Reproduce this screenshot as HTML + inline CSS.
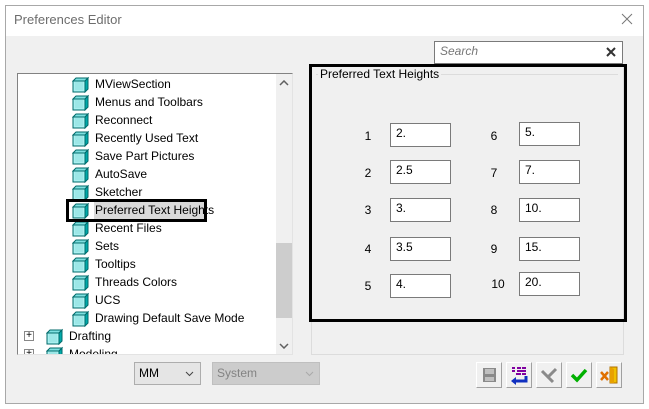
<!DOCTYPE html>
<html><head><meta charset="utf-8"><style>
*{margin:0;padding:0;box-sizing:border-box}
body{width:649px;height:409px;background:#fff;position:relative;overflow:hidden;font-family:"Liberation Sans",Arial,sans-serif;font-size:12px;color:#000}
.a{position:absolute}
.win{left:5px;top:5px;width:639px;height:399px;border:1px solid #a8a8a8;background:#f0f0f0}
.title{left:6px;top:6px;width:637px;height:30px;background:#fff}
.tree{left:17px;top:73px;width:276px;height:282px;border:1px solid #828282;border-right-color:#e3e3e3;border-bottom-color:#e3e3e3;background:#fff;overflow:hidden}
.row{position:absolute;height:18px;line-height:18px;white-space:nowrap;z-index:2}
.inp{position:absolute;width:61px;height:24px;border:1px solid #7a7a7a;background:#fff;padding-left:5px;line-height:18px}
.lbl{position:absolute;width:20px;text-align:center}
.btn{position:absolute;top:362px;width:26px;height:26px;background:#f0f0f0;border:1px solid #fff;border-right-color:#a0a0a0;border-bottom-color:#a0a0a0}
</style></head><body>
<div class="a win"></div>
<div class="a title"></div>
<div class="a" style="left:14px;top:12px;font-size:13px;color:#6d6d6d">Preferences Editor</div>
<svg class="a" style="left:621px;top:13px" width="12" height="12"><path d="M1 1L11 11M11 1L1 11" stroke="#777" stroke-width="1"/></svg>

<div class="a" style="left:434px;top:41px;width:189px;height:23px;border:1px solid #7a7a7a;background:#fff"></div>
<div class="a" style="left:440px;top:44px;font-style:italic;color:#777">Search</div>
<svg class="a" style="left:606px;top:47px" width="10" height="10"><path d="M1 1L9 9M9 1L1 9" stroke="#333" stroke-width="2"/></svg>

<div class="a tree">
<svg width="0" height="0" style="position:absolute"><defs><g id="cube"><path d="M1 5L4 2H16L13 5Z" fill="#7ee0e0" stroke="#006a6a"/><path d="M13 5L16 2V13L13 16Z" fill="#0aa" stroke="#006a6a"/><rect x="1" y="5" width="12" height="11" fill="#a9f0f0" stroke="#006a6a"/><path d="M3 7h8M3 9h8M3 11h8M3 13h8" stroke="#7cc" stroke-width=".6"/></g></defs></svg>
</div>
<div class="a" style="left:18px;top:74px;width:258px;height:280px;overflow:hidden" id="rows">
</div>
<div class="a" style="left:276px;top:74px;width:16px;height:280px;background:#f0f0f0"></div>
<div class="a" style="left:276px;top:243px;width:16px;height:75px;background:#cdcdcd"></div>
<svg class="a" style="left:279px;top:80px" width="10" height="6"><path d="M1 5L5 1L9 5" stroke="#606060" fill="none" stroke-width="1.5"/></svg>
<svg class="a" style="left:279px;top:343px" width="10" height="6"><path d="M1 1L5 5L9 1" stroke="#606060" fill="none" stroke-width="1.5"/></svg>

<div class="a" style="left:311px;top:65px;width:313px;height:290px;border:1px solid #dcdcdc"></div>
<div class="a" style="left:309px;top:64px;width:318px;height:258px;border:3px solid #000"></div>
<div class="a" style="left:316px;top:74px;width:302px;border-top:1px solid #dcdcdc"></div>
<div class="a" style="left:318px;top:67px;background:#f0f0f0;padding:0 2px">Preferred Text Heights</div>

<div class="lbl" style="left:358px;top:129px">1</div><div class="inp" style="left:390px;top:123px">2.</div>
<div class="lbl" style="left:358px;top:166px">2</div><div class="inp" style="left:390px;top:160px">2.5</div>
<div class="lbl" style="left:358px;top:203px">3</div><div class="inp" style="left:390px;top:198px">3.</div>
<div class="lbl" style="left:358px;top:242px">4</div><div class="inp" style="left:390px;top:237px">3.5</div>
<div class="lbl" style="left:358px;top:279px">5</div><div class="inp" style="left:390px;top:274px">4.</div>
<div class="lbl" style="left:484px;top:129px">6</div><div class="inp" style="left:519px;top:122px">5.</div>
<div class="lbl" style="left:484px;top:166px">7</div><div class="inp" style="left:519px;top:160px">7.</div>
<div class="lbl" style="left:484px;top:203px">8</div><div class="inp" style="left:519px;top:198px">10.</div>
<div class="lbl" style="left:484px;top:242px">9</div><div class="inp" style="left:519px;top:237px">15.</div>
<div class="lbl" style="left:488px;top:277px">10</div><div class="inp" style="left:519px;top:272px">20.</div>

<div class="a" style="left:134px;top:362px;width:67px;height:23px;border:1px solid #adadad;background:#e5e5e5;line-height:21px;padding-left:4px">MM</div>
<svg class="a" style="left:185px;top:371px" width="9" height="6"><path d="M1 1L4.5 4.5L8 1" stroke="#444" fill="none"/></svg>
<div class="a" style="left:212px;top:362px;width:108px;height:23px;border:1px solid #bfbfbf;background:#cccccc;line-height:21px;padding-left:4px;color:#838383">System</div>
<svg class="a" style="left:305px;top:371px" width="9" height="6"><path d="M1 1L4.5 4.5L8 1" stroke="#aaa" fill="none"/></svg>

<div class="btn" style="left:476px"><svg width="24" height="24"><rect x="6" y="5" width="13" height="14" fill="#8a8a8a"/><rect x="8" y="6" width="9" height="5" fill="#c0c0c0"/><rect x="8" y="14" width="9" height="4" fill="#c0c0c0"/></svg></div>
<div class="btn" style="left:506px"><svg width="24" height="24"><path d="M5 5h3M10 5h4M15 5h4M5 8h3M10 8h9M9 11h5M15 11h4" stroke="#8000a0" stroke-width="2"/><path d="M19 13v5H8" stroke="#1030c0" stroke-width="3" fill="none"/><path d="M9 14L4 18L9 22Z" fill="#1030c0"/></svg></div>
<div class="btn" style="left:536px"><svg width="24" height="24"><path d="M5 8L11 14L19 6M11 14L16 19" stroke="#8a8a8a" stroke-width="3" fill="none"/></svg></div>
<div class="btn" style="left:566px"><svg width="24" height="24"><path d="M5 12L10 17L19 7" stroke="#00b000" stroke-width="3.5" fill="none"/></svg></div>
<div class="btn" style="left:596px"><svg width="24" height="24"><path d="M13 4h7v16h-7z" fill="#f0c000" stroke="#b07000"/><path d="M13 4l4 2v14l-4-0z" fill="#e8a000"/><path d="M4 9L11 17M11 9L4 17" stroke="#e07000" stroke-width="2.5"/></svg></div>

<script>
var items=["MViewSection","Menus and Toolbars","Reconnect","Recently Used Text","Save Part Pictures","AutoSave","Sketcher","Preferred Text Heights","Recent Files","Sets","Tooltips","Threads Colors","UCS","Drawing Default Save Mode"];
var h='<div style="position:absolute;left:76px;top:128px;width:110px;height:17px;background:#d9d9d9;z-index:1"></div>';
for(var i=0;i<items.length;i++){var y=1+i*18;
h+='<svg style="position:absolute;left:54px;top:'+(y+1)+'px" width="17" height="17"><use href="#cube"/></svg>';
h+='<div class="row" style="left:77px;top:'+y+'px">'+items[i]+'</div>';}
h+='<div style="position:absolute;left:48px;top:125px;width:141px;height:23px;border:3px solid #000;z-index:3"></div>';
var tops=[253,271],names=["Drafting","Modeling"];
for(var j=0;j<2;j++){var y=tops[j];
h+='<div style="position:absolute;left:6px;top:'+(y+4)+'px;width:10px;height:10px;border:1px solid #888;background:#fff;font-size:10px;line-height:8px;text-align:center">+</div>';
h+='<svg style="position:absolute;left:28px;top:'+(y+1)+'px" width="17" height="17"><use href="#cube"/></svg>';
h+='<div class="row" style="left:51px;top:'+y+'px">'+names[j]+'</div>';}
document.getElementById("rows").innerHTML=document.querySelector(".tree").innerHTML+h;
</script>
</body></html>
